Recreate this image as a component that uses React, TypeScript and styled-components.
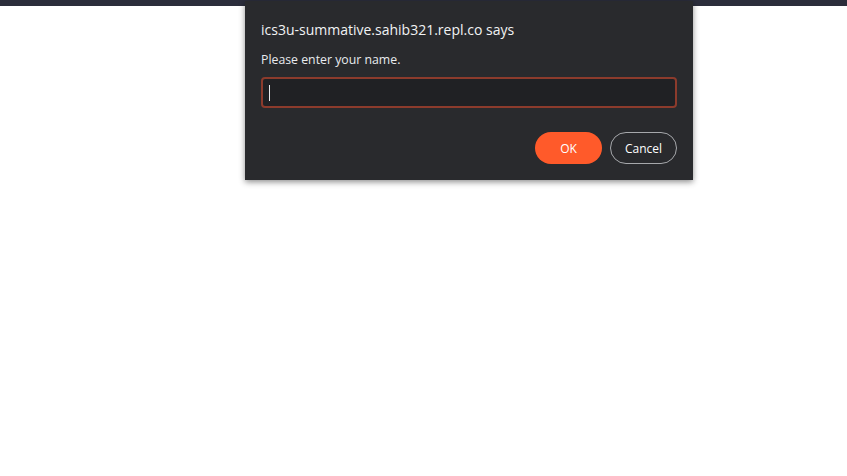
import styled, { createGlobalStyle } from "styled-components";

const GlobalStyle = createGlobalStyle`
  html, body {
    margin: 0;
    padding: 0;
    background: #ffffff;
    font-family: "Open Sans", "Noto Sans", sans-serif;
  }
`;

const Page = styled.div`
  position: relative;
  width: 100%;
  height: 476px;
  background: #ffffff;
`;

const TopBar = styled.div`
  height: 6px;
  background: #2b2d3b;
`;

const Dialog = styled.div`
  position: absolute;
  top: 1px;
  left: 245px;
  width: 448px;
  box-sizing: border-box;
  padding: 16px;
  background: #292a2d;
  box-shadow: 0 2px 6px rgba(0, 0, 0, 0.45);
  color: #e8eaed;
  display: flex;
  flex-direction: column;
`;

const Title = styled.div`
  font-size: 14px;
  line-height: 26px;
  color: #f1f3f4;
`;

const Message = styled.div`
  font-size: 12.3px;
  line-height: 18px;
  margin-top: 8px;
`;

const Input = styled.div`
  margin-top: 8px;
  height: 31px;
  box-sizing: border-box;
  border: 2px solid #8c3b2c;
  border-radius: 4px;
  background: #202124;
  display: flex;
  align-items: center;
  padding-left: 6px;
`;

const Caret = styled.span`
  width: 1px;
  height: 16px;
  background: #e8eaed;
`;

const Actions = styled.div`
  display: flex;
  justify-content: flex-end;
  gap: 8px;
  margin-top: 24px;
`;

const Button = styled.button<{ $primary?: boolean }>`
  width: 67px;
  height: 32px;
  box-sizing: border-box;
  border-radius: 16px;
  font-family: "Open Sans", "Noto Sans", sans-serif;
  font-size: 12px;
  color: #ffffff;
  cursor: pointer;
  background: ${(p) => (p.$primary ? "#ff5a2a" : "transparent")};
  border: ${(p) => (p.$primary ? "none" : "1px solid #a6a8ab")};
`;

export default function App() {
  return (
    <>
      <GlobalStyle />
      <Page>
        <TopBar />
        <Dialog>
          <Title>ics3u-summative.sahib321.repl.co says</Title>
          <Message>Please enter your name.</Message>
          <Input>
            <Caret />
          </Input>
          <Actions>
            <Button $primary>OK</Button>
            <Button>Cancel</Button>
          </Actions>
        </Dialog>
      </Page>
    </>
  );
}
